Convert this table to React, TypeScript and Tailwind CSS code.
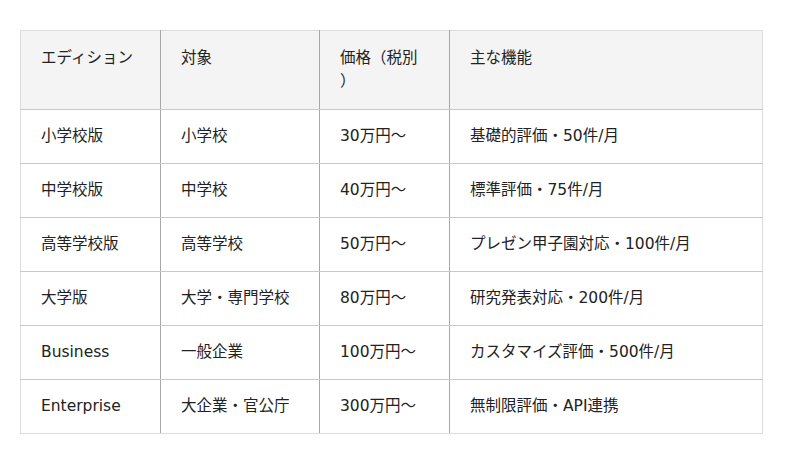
import React from "react";

const rows = [
  ["小学校版", "小学校", "30万円〜", "基礎的評価・50件/月"],
  ["中学校版", "中学校", "40万円〜", "標準評価・75件/月"],
  ["高等学校版", "高等学校", "50万円〜", "プレゼン甲子園対応・100件/月"],
  ["大学版", "大学・専門学校", "80万円〜", "研究発表対応・200件/月"],
  ["Business", "一般企業", "100万円〜", "カスタマイズ評価・500件/月"],
  ["Enterprise", "大企業・官公庁", "300万円〜", "無制限評価・API連携"],
];

const headers: React.ReactNode[] = [
  "エディション",
  "対象",
  <>
    価格（税別
    <br />）
  </>,
  "主な機能",
];
const widths = ["w-[140px]", "w-[159px]", "w-[130px]", "w-[313px]"];

export default function App() {
  return (
    <div
      className="w-[800px] h-[464px] bg-white pt-[30px] pl-[20px] text-[15.5px] text-[#222]"
      style={{ fontFamily: '"DejaVu Sans", "Noto Sans CJK JP", sans-serif' }}
    >
      <table className="w-[742px] table-fixed border-collapse border border-[#dcdcdc]">
        <colgroup>
          {widths.map((w, i) => (
            <col key={i} className={w} />
          ))}
        </colgroup>
        <thead>
          <tr className="bg-[#f4f4f4]">
            {headers.map((h, i) => (
              <th
                key={i}
                className={`text-left align-top font-normal px-5 py-4 leading-[23px] border-b border-[#c8c8c8] ${
                  i < 3 ? "border-r border-r-[#a8a8a8]" : ""
                }`}
              >
                {h}
              </th>
            ))}
          </tr>
        </thead>
        <tbody>
          {rows.map((r, ri) => (
            <tr key={ri}>
              {r.map((c, ci) => (
                <td
                  key={ci}
                  className={`px-5 py-4 leading-[21px] border-b border-[#c8c8c8] ${
                    ci < 3 ? "border-r border-r-[#a8a8a8]" : ""
                  } ${ri === rows.length - 1 ? "border-b-[#dcdcdc]" : ""}`}
                >
                  {c}
                </td>
              ))}
            </tr>
          ))}
        </tbody>
      </table>
    </div>
  );
}
